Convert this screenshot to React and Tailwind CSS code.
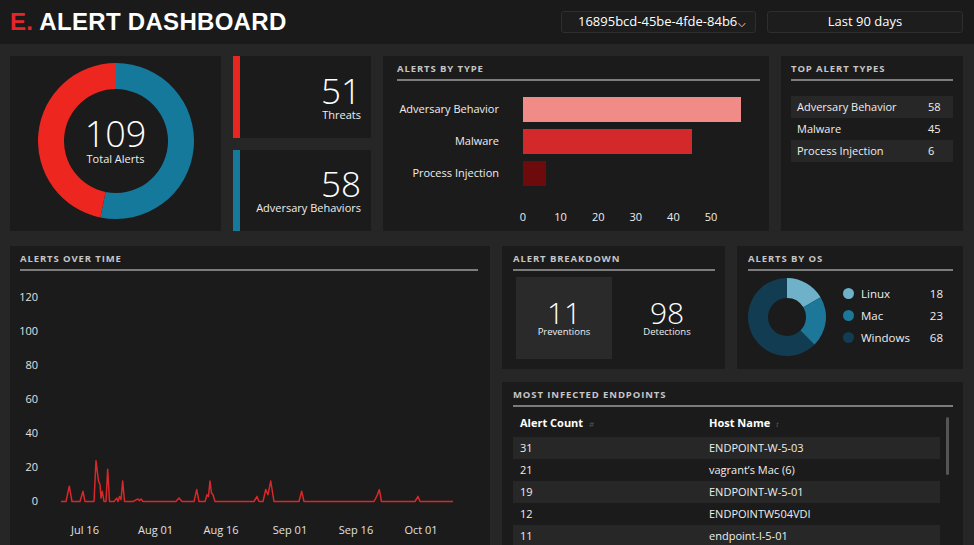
import React from 'react';

const arc = (cx, cy, ro, ri, f0, f1) => {
  const pt = (r, f) => {
    const a = f * 2 * Math.PI - Math.PI / 2;
    return [cx + r * Math.cos(a), cy + r * Math.sin(a)];
  };
  const large = f1 - f0 > 0.5 ? 1 : 0;
  const [x0, y0] = pt(ro, f0);
  const [x1, y1] = pt(ro, f1);
  const [x2, y2] = pt(ri, f1);
  const [x3, y3] = pt(ri, f0);
  return `M${x0} ${y0} A${ro} ${ro} 0 ${large} 1 ${x1} ${y1} L${x2} ${y2} A${ri} ${ri} 0 ${large} 0 ${x3} ${y3} Z`;
};

const alertTypes = [
  { name: 'Adversary Behavior', count: 58, color: 'bg-[#f08b88]' },
  { name: 'Malware', count: 45, color: 'bg-[#d4292a]' },
  { name: 'Process Injection', count: 6, color: 'bg-[#6d0a0c]' },
];

const osData = [
  { name: 'Linux', count: 18, color: '#6eb1c8' },
  { name: 'Mac', count: 23, color: '#1c7798' },
  { name: 'Windows', count: 68, color: '#123c51' },
];

const endpoints = [
  ['31', 'ENDPOINT-W-5-03'],
  ['21', 'vagrant’s Mac (6)'],
  ['19', 'ENDPOINT-W-5-01'],
  ['12', 'ENDPOINTW504VDI'],
  ['11', 'endpoint-l-5-01'],
  ['9', 'ENDPOINT-W-5-02'],
];

// [absolute x, value] points of the alerts-over-time line
const timeline = [
  [61, 0], [66, 0], [69.3, 9], [72, 0], [80, 0], [83, 6], [85, 0], [94, 0], [96, 24], [98.5, 12],
  [100, 10], [101, 2], [102.3, 6], [104, 0], [106, 0], [107.7, 19], [109.5, 0], [114, 0], [116.7, 2],
  [118, 0], [119.5, 3], [121, 1], [122.7, 12], [124.5, 0], [133, 0], [138, 1.5], [139.5, 0.5],
  [141, 1.5], [143, 0], [176, 0], [179, 2], [182, 0], [194, 0], [196.7, 7], [199, 0], [205, 0],
  [207, 4], [208.5, 3], [210, 12], [211.5, 5], [213, 4], [215, 0], [254, 0], [257, 3], [259, 0],
  [263, 0], [265.7, 7], [268, 4], [270.7, 12], [274, 0], [299, 0], [301.7, 6], [304, 0], [374, 0],
  [376.7, 3], [379.3, 7], [381.5, 0], [415, 0], [418, 3], [420, 0], [453, 0],
];

function Title({ children }) {
  return (
    <div className="pt-[7px]">
      <div className="text-[9.5px] leading-[12px] font-bold tracking-[0.9px] text-[#c6c6c6] uppercase">{children}</div>
      <div className="mt-[4px] h-[2px] bg-[#7c7c7c]" />
    </div>
  );
}

function StatCard({ value, label, bar }) {
  return (
    <div className="flex flex-1">
      <div className={`w-[7px] ${bar}`} />
      <div className="flex-1 bg-[#1b1b1b] flex flex-col items-end justify-center pr-[10px]">
        <div className="text-[35px] leading-[35px] font-light text-white">{value}</div>
        <div className="text-[11px] leading-[13px] text-[#eeeeee]">{label}</div>
      </div>
    </div>
  );
}

function App() {
  const total = 109;
  const ticks = [0, 10, 20, 30, 40, 50];
  const pts = timeline.map(([x, v]) => `${x - 20},${230.5 - v * 1.7}`).join(' ');
  let acc = 0;

  return (
    <div className="w-[974px] h-[545px] overflow-hidden bg-[#262626] font-['Open_Sans',sans-serif] text-[#eeeeee]">
      {/* header */}
      <div className="h-[44px] bg-[#1a1a1a] flex items-center pl-[10px] pr-[11px]">
        <div className="font-['Liberation_Sans',sans-serif] font-bold text-[24px] tracking-[0.3px] leading-none">
          <span className="text-[#e4262b]">E.</span> <span className="text-white">ALERT DASHBOARD</span>
        </div>
        <div className="ml-auto flex gap-[11px]">
          <div className="w-[195px] h-[22px] rounded-[3px] border border-[#2e2e2e] bg-[#1d1d1d] flex items-center pl-[16px] text-[13px] text-white">
            <span>16895bcd-45be-4fde-84b6</span>
            <span className="text-[10px] ml-[1px] mt-[2px]">⌵</span>
          </div>
          <div className="w-[196px] h-[22px] rounded-[3px] border border-[#2e2e2e] bg-[#1d1d1d] flex items-center justify-center text-[13px] text-white">
            Last 90 days
          </div>
        </div>
      </div>

      <div className="pl-[10px] pr-[11px] pt-[12px]">
        {/* row 1 */}
        <div className="flex gap-3 h-[175px]">
          <div className="w-[211px] bg-[#1b1b1b] flex items-center justify-center pb-[6px]">
            <div className="relative w-[156px] h-[156px]">
              <svg width="156" height="156" viewBox="0 0 156 156">
                <path d={arc(78, 78, 78, 52, 0, 58 / total)} fill="#15799c" />
                <path d={arc(78, 78, 78, 52, 58 / total, 0.99999)} fill="#ed2720" />
              </svg>
              <div className="absolute inset-0 flex flex-col items-center justify-center">
                <div className="text-[36px] leading-[36px] font-light text-white">109</div>
                <div className="text-[11px] leading-[14px]">Total Alerts</div>
              </div>
            </div>
          </div>

          <div className="w-[138px] flex flex-col gap-3">
            <StatCard value="51" label="Threats" bar="bg-[#e8261f]" />
            <StatCard value="58" label="Adversary Behaviors" bar="bg-[#16799c]" />
          </div>

          <div className="w-[386px] bg-[#1b1b1b] pl-[14px] pr-[9px]">
            <Title>Alerts by type</Title>
            <div className="mt-[16px] flex flex-col gap-[7px]">
              {alertTypes.map((t) => (
                <div key={t.name} className="flex items-center h-[25px]">
                  <div className="w-[102px] text-right text-[11px]">{t.name}</div>
                  <div className="ml-[24px] h-full">
                    <div className={`h-full ${t.color}`} style={{ width: t.count * 3.76 }} />
                  </div>
                </div>
              ))}
            </div>
            <div className="relative ml-[126px] mt-[24px] h-[14px] text-[11px]">
              {ticks.map((v) => (
                <div key={v} className="absolute top-0 w-[30px] -ml-[15px] text-center leading-[14px]" style={{ left: v * 3.76 }}>
                  {v}
                </div>
              ))}
            </div>
          </div>

          <div className="flex-1 bg-[#1b1b1b] pl-[10px] pr-[10px]">
            <Title>Top alert types</Title>
            <div className="mt-[15px]">
              {alertTypes.map((t, i) => (
                <div key={t.name} className={`flex items-center h-[22px] pl-[6px] pr-[12px] text-[11px] ${i % 2 === 0 ? 'bg-[#272727]' : ''}`}>
                  <span className="flex-1">{t.name}</span>
                  <span className="w-[13px]">{t.count}</span>
                </div>
              ))}
            </div>
          </div>
        </div>

        {/* row 2 */}
        <div className="flex gap-3 mt-[15px] h-[320px]">
          <div className="w-[480px] bg-[#1b1b1b] pl-[10px] pr-[12px]">
            <Title>Alerts over time</Title>
            <svg width="460" height="280" className="block" fontSize="11">
              {[120, 100, 80, 60, 40, 20, 0].map((v) => (
                <text key={v} x="18" y={231.5 - v * 1.7} textAnchor="end" dominantBaseline="middle" fill="#e0e0e0">
                  {v}
                </text>
              ))}
              {[['Jul 16', 85], ['Aug 01', 155.5], ['Aug 16', 221], ['Sep 01', 290], ['Sep 16', 356], ['Oct 01', 421]].map(([l, x]) => (
                <text key={l} x={x - 20} y="260" textAnchor="middle" dominantBaseline="middle" fill="#e0e0e0">
                  {l}
                </text>
              ))}
              <polyline points={pts} fill="none" stroke="#d8282a" strokeWidth="1.5" strokeLinejoin="round" />
            </svg>
          </div>

          <div className="flex-1 flex flex-col gap-[13px]">
            <div className="flex gap-3 h-[123px] shrink-0">
              <div className="w-[223px] bg-[#1b1b1b] pl-[11px] pr-[10px]">
                <Title>Alert breakdown</Title>
                <div className="flex gap-[7px] mt-[6px] ml-[3px]">
                  <div className="w-[98px] h-[82px] bg-[#2a2a2a] flex flex-col items-center justify-center">
                    <div className="text-[30px] leading-[27px] font-light text-white">11</div>
                    <div className="text-[9.5px] leading-[12px]">Preventions</div>
                  </div>
                  <div className="w-[98px] h-[82px] flex flex-col items-center justify-center">
                    <div className="text-[30px] leading-[27px] font-light text-white">98</div>
                    <div className="text-[9.5px] leading-[12px]">Detections</div>
                  </div>
                </div>
              </div>

              <div className="flex-1 bg-[#1b1b1b] pl-[11px] pr-[10px]">
                <Title>Alerts by OS</Title>
                <div className="flex items-center mt-[7px]">
                  <svg width="78" height="78" viewBox="0 0 78 78">
                    {osData.map((o) => {
                      const f0 = acc / total;
                      acc += o.count;
                      const f1 = Math.min(acc / total, 0.99999);
                      return <path key={o.name} d={arc(39, 39, 39, 19, f0, f1)} fill={o.color} />;
                    })}
                  </svg>
                  <div className="ml-[17px] flex-1 pr-[10px] -mt-[3px]">
                    {osData.map((o) => (
                      <div key={o.name} className="flex items-center h-[22px] text-[11.5px]">
                        <span className="w-[11px] h-[11px] rounded-full" style={{ backgroundColor: o.color }} />
                        <span className="ml-[7px] flex-1">{o.name}</span>
                        <span>{o.count}</span>
                      </div>
                    ))}
                  </div>
                </div>
              </div>
            </div>

            <div className="flex-1 min-h-0 bg-[#1b1b1b] pl-[11px] pr-[10px]">
              <Title>Most infected endpoints</Title>
              <div className="flex">
                <div className="flex-1 text-[11px]">
                  <div className="flex items-center h-[30px] pt-[2px] font-bold text-white">
                    <div className="w-[196px] pl-[7px]">
                      Alert Count <span className="ml-[3px] text-[8px] font-normal text-[#555]">#</span>
                    </div>
                    <div>
                      Host Name <span className="ml-[3px] text-[8px] font-normal italic text-[#555]">t</span>
                    </div>
                  </div>
                  {endpoints.map(([c, h], i) => (
                    <div key={h} className={`flex items-center h-[22px] ${i % 2 === 0 ? 'bg-[#272727]' : ''}`}>
                      <div className="w-[196px] pl-[7px]">{c}</div>
                      <div>{h}</div>
                    </div>
                  ))}
                </div>
                <div className="ml-[6px] mr-[4px] w-[3px] h-[58px] mt-[10px] rounded-full bg-[#555555]" />
              </div>
            </div>
          </div>
        </div>
      </div>
    </div>
  );
}

export default App;
